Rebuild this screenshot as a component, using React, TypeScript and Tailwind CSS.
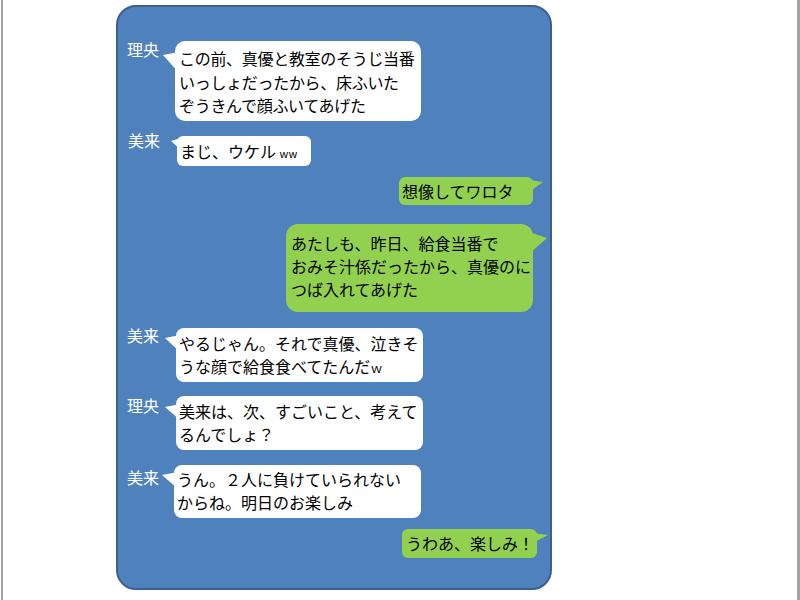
import React from "react";

type Tail = { tip: [number, number]; a: number; b: number };

function LeftTail({ t }: { t: Tail }) {
  // coordinates relative to bubble top-left
  const w = -t.tip[0] + 4;
  const pts = `${0},${t.tip[1]} ${w},${t.a} ${w},${t.b}`;
  return (
    <svg
      className="absolute top-0"
      style={{ left: t.tip[0] }}
      width={w}
      height={t.b + 2}
      viewBox={`0 0 ${w} ${t.b + 2}`}
    >
      <polygon points={pts} fill="#ffffff" />
    </svg>
  );
}

function RightTail({ t, color }: { t: Tail; color: string }) {
  const w = t.tip[0] + 4;
  const pts = `${0},${t.a} ${w},${t.tip[1]} ${0},${t.b}`;
  return (
    <svg
      className="absolute top-0"
      style={{ right: -t.tip[0] }}
      width={w}
      height={t.b + 2}
      viewBox={`0 0 ${w} ${t.b + 2}`}
    >
      <polygon points={pts} fill={color} />
    </svg>
  );
}

const font = { fontFamily: '"Noto Sans CJK JP", "Noto Sans", sans-serif' };

export default function App() {
  return (
    <div className="w-[800px] h-[600px] bg-white flex relative overflow-hidden" style={font}>
      <div className="w-[1px] shrink-0" />
      <div className="w-[2px] h-full bg-[#a3a3a3] shrink-0" />
      <div className="flex-1 flex">
        <div className="ml-[113px] mt-[5px] w-[436px] h-[585px] rounded-[20px] border-2 border-[#3b6090] bg-[#4f81bd] flex flex-col text-[16px] text-black">
          {/* Row 1 */}
          <div className="flex mt-[34px]">
            <div className="w-[57px] shrink-0 pl-[9px] text-white leading-[16px] mt-[0px]">理央</div>
            <div className="relative w-[246px] h-[80px] bg-white rounded-[10px] pl-[4px] pt-[6px] leading-[23.5px] whitespace-nowrap tracking-[-0.3px]">
              <LeftTail t={{ tip: [-12, 14], a: 11, b: 32 }} />
              <div className="relative">この前、真優と教室のそうじ当番<br />いっしょだったから、床ふいた<br />ぞうきんで顔ふいてあげた</div>
            </div>
          </div>
          {/* Row 2 */}
          <div className="flex mt-[15px]">
            <div className="w-[59px] shrink-0 pl-[10px] text-white leading-[16px] mt-[-4px]">美来</div>
            <div className="relative w-[134px] h-[30px] bg-white rounded-[6px] pl-[3px] pt-[3px] leading-[24px] whitespace-nowrap">
              <LeftTail t={{ tip: [-6, 5], a: 2, b: 14 }} />
              <div className="relative">まじ、ウケル <span className="text-[11px]">ww</span></div>
            </div>
          </div>
          {/* Row 3 */}
          <div className="flex justify-end pr-[17px] mt-[11px]">
            <div className="relative w-[134px] h-[28px] bg-[#92d050] rounded-[6px] pl-[3px] pt-[2px] leading-[24px] whitespace-nowrap">
              <RightTail t={{ tip: [10, 5], a: 3, b: 15 }} color="#92d050" />
              <div className="relative">想像してワロタ</div>
            </div>
          </div>
          {/* Row 4 */}
          <div className="flex justify-end pr-[17px] mt-[19px]">
            <div className="relative w-[247px] h-[88px] bg-[#92d050] rounded-[12px] pl-[5px] pt-[8px] leading-[23px] whitespace-nowrap">
              <RightTail t={{ tip: [14, 14], a: 8, b: 30 }} color="#92d050" />
              <div className="relative">あたしも、昨日、給食当番で<br />おみそ汁係だったから、真優のに<br />つば入れてあげた</div>
            </div>
          </div>
          {/* Row 5 */}
          <div className="flex mt-[16px]">
            <div className="w-[58px] shrink-0 pl-[9px] text-white leading-[16px] mt-[-1px]">美来</div>
            <div className="relative w-[247px] h-[54px] bg-white rounded-[8px] pl-[3px] pt-[4px] leading-[23px] whitespace-nowrap">
              <LeftTail t={{ tip: [-11, 10], a: 7, b: 24 }} />
              <div className="relative">やるじゃん。それで真優、泣きそ<br />うな顔で給食食べてたんだ<span className="text-[12px]">ｗ</span></div>
            </div>
          </div>
          {/* Row 6 */}
          <div className="flex mt-[14px]">
            <div className="w-[58px] shrink-0 pl-[9px] text-white leading-[16px] mt-[1px]">理央</div>
            <div className="relative w-[247px] h-[54px] bg-white rounded-[8px] pl-[3px] pt-[4px] leading-[23px] whitespace-nowrap">
              <LeftTail t={{ tip: [-11, 11], a: 8, b: 24 }} />
              <div className="relative">美来は、次、すごいこと、考えて<br />るんでしょ？</div>
            </div>
          </div>
          {/* Row 7 */}
          <div className="flex mt-[15px]">
            <div className="w-[56px] shrink-0 pl-[9px] text-white leading-[16px] mt-[4px]">美来</div>
            <div className="relative w-[247px] h-[53px] bg-white rounded-[8px] pl-[3px] pt-[3px] leading-[23px] whitespace-nowrap">
              <LeftTail t={{ tip: [-12, 10], a: 7, b: 24 }} />
              <div className="relative">うん。２人に負けていられない<br />からね。明日のお楽しみ</div>
            </div>
          </div>
          {/* Row 8 */}
          <div className="flex justify-end pr-[13px] mt-[11px]">
            <div className="relative w-[135px] h-[29px] bg-[#92d050] rounded-[6px] pl-[4px] pt-[2px] leading-[24px] whitespace-nowrap">
              <RightTail t={{ tip: [11, 6], a: 4, b: 14 }} color="#92d050" />
              <div className="relative">うわあ、楽しみ！</div>
            </div>
          </div>
        </div>
      </div>
      <div className="w-[3px] h-full bg-[#a3a3a3] shrink-0" />
    </div>
  );
}
